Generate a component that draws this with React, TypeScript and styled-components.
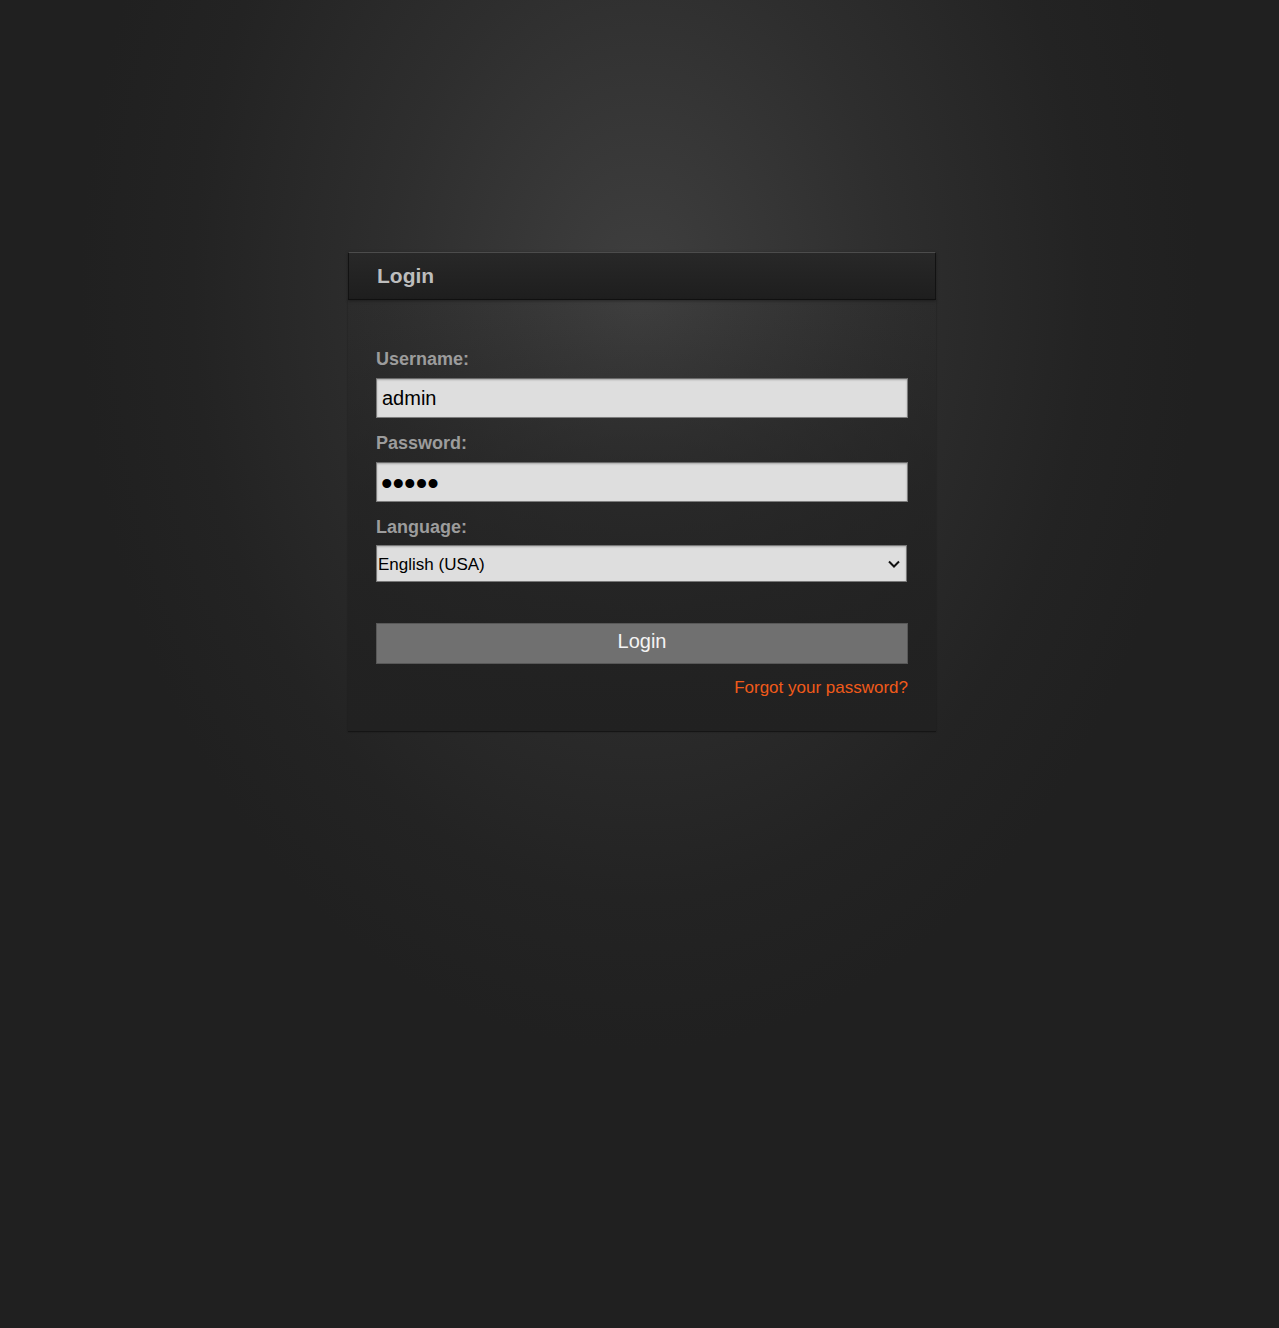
import { createGlobalStyle } from 'styled-components';
import styled from 'styled-components';

const GlobalStyle = createGlobalStyle`
  html, body {
    margin: 0;
    padding: 0;
    min-height: 100%;
  }
  body {
    min-height: 1328px;
    font-family: "Liberation Sans", Arial, sans-serif;
    background-color: #202020;
    background-image: radial-gradient(560px 760px at 640px 290px, #3f3f3f 0%, #2e2e2e 45%, #232323 80%, #202020 100%);
    background-repeat: no-repeat;
  }
`;

const Panel = styled.div`
  width: 588px;
  margin: 252px 0 0 calc(50% - 291.5px);
`;

const PanelHeader = styled.div`
  height: 46px;
  display: flex;
  align-items: center;
  padding-left: 28px;
  background: linear-gradient(to bottom, #282828, #1e1e1e);
  border: 1px solid #121212;
  border-top-color: #4c4c4c;
  box-shadow: 0 1px 3px rgba(0, 0, 0, 0.35);

  h2 {
    margin: 0;
    font-size: 21px;
    font-weight: bold;
    color: #bdbdbd;
  }
`;

const PanelBody = styled.form`
  padding: 48px 27px 33px 28px;
  display: flex;
  flex-direction: column;
  background: linear-gradient(to bottom, rgba(33, 33, 33, 0) 0%, rgba(33, 33, 33, 0.6) 45%, rgba(33, 33, 33, 1) 100%);
  border-bottom: 1px solid #151515;
  box-shadow: 0 0 2px rgba(0, 0, 0, 0.3);
`;

const Label = styled.label`
  font-size: 18px;
  line-height: 22px;
  font-weight: bold;
  color: #9c9c9c;
  margin-bottom: ${(p: { $gap?: number }) => p.$gap ?? 8}px;
`;

const TextInput = styled.input<{ $masked?: boolean }>`
  box-sizing: border-box;
  width: 532px;
  height: 40px;
  margin: 0 0 14px;
  padding: ${(p) => (p.$masked ? '4px 4px 0' : '0 5px')};
  font-family: "Liberation Sans", Arial, sans-serif;
  font-size: ${(p) => (p.$masked ? 33 : 20)}px;
  color: #000;
  background: #dedede;
  border: 1px solid #7c7c7c;
  border-top-color: #6a6a6a;
  box-shadow: inset 0 1px 2px rgba(0, 0, 0, 0.25);
  border-radius: 0;
  outline: none;
`;

const SelectWrap = styled.div`
  position: relative;
  width: 531px;
  height: 37px;

  svg {
    position: absolute;
    right: 7px;
    top: 15px;
    pointer-events: none;
  }
`;

const Select = styled.select`
  appearance: none;
  -webkit-appearance: none;
  box-sizing: border-box;
  width: 100%;
  height: 100%;
  margin: 0;
  padding: 1px 24px 0 1px;
  font-family: "Liberation Sans", Arial, sans-serif;
  font-size: 17px;
  color: #000;
  background-color: #dedede;
  border: 1px solid #777;
  border-radius: 0;
  box-shadow: inset 0 1px 2px rgba(0, 0, 0, 0.2);
  outline: none;
`;

const Button = styled.button`
  box-sizing: border-box;
  width: 532px;
  height: 41px;
  margin-top: 41px;
  padding: 0 0 4px;
  font-family: "Liberation Sans", Arial, sans-serif;
  font-size: 20px;
  color: #f4f4f4;
  background: #707070;
  border: 1px solid #585858;
  border-radius: 0;
  cursor: pointer;
`;

const LinkRow = styled.div`
  display: flex;
  justify-content: flex-end;
  margin-top: 14px;
  width: 532px;

  a {
    font-size: 17px;
    line-height: 20px;
    color: #f05a1a;
    text-decoration: none;
  }
`;

export default function App() {
  return (
    <>
      <GlobalStyle />
      <Panel>
        <PanelHeader>
          <h2>Login</h2>
        </PanelHeader>
        <PanelBody onSubmit={(e) => e.preventDefault()}>
          <Label htmlFor="username">Username:</Label>
          <TextInput id="username" type="text" defaultValue="admin" />
          <Label htmlFor="password">Password:</Label>
          <TextInput id="password" type="password" defaultValue="admin" $masked />
          <Label htmlFor="language" $gap={7}>
            Language:
          </Label>
          <SelectWrap>
            <Select id="language" defaultValue="en-US">
              <option value="en-US">English (USA)</option>
              <option value="de-DE">Deutsch</option>
              <option value="fr-FR">Français</option>
            </Select>
            <svg width="12" height="8" viewBox="0 0 12 8">
              <path d="M1 1.5 6 6.5 11 1.5" fill="none" stroke="#111" strokeWidth="2" />
            </svg>
          </SelectWrap>
          <Button type="submit">Login</Button>
          <LinkRow>
            <a href="#">Forgot your password?</a>
          </LinkRow>
        </PanelBody>
      </Panel>
    </>
  );
}
